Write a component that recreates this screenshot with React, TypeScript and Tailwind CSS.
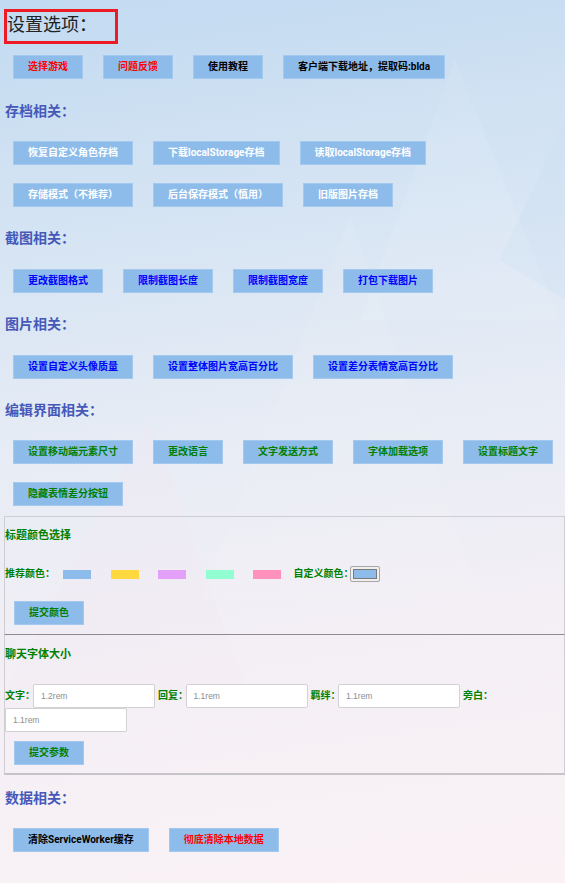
import React from "react";

type B = { t: string; c: string };

const RED = "text-[#ff0000]";
const BLK = "text-black";
const WHT = "text-white";
const BLU = "text-[#0000ff]";
const GRN = "text-[#008000]";

function Btn({ t, c }: B) {
  return (
    <button
      className={`h-[24px] shrink-0 whitespace-nowrap border border-[#a3c9ee] bg-[#8ebcea] px-[14px] text-[10px] font-bold leading-[12px] ${c}`}
    >
      {t}
    </button>
  );
}

function Row({ items, cls = "mt-[20px]" }: { items: B[]; cls?: string }) {
  return (
    <div className={`flex flex-wrap gap-x-[20px] gap-y-[18px] pl-[13px] ${cls}`}>
      {items.map((b) => (
        <Btn key={b.t} t={b.t} c={b.c} />
      ))}
    </div>
  );
}

function Heading({ t, cls = "mt-[21px]" }: { t: string; cls?: string }) {
  return (
    <div className={`flex h-[20px] items-center pl-[5px] text-[14px] font-bold text-[#4659b9] ${cls}`}>
      {t}
    </div>
  );
}

function Field({ label, ph, first }: { label: string; ph: string; first?: boolean }) {
  return (
    <>
      <span
        className={`shrink-0 whitespace-nowrap text-[10px] font-bold leading-[12px] text-[#008000] ${
          first ? "w-[28px]" : "ml-[3px] w-[27.5px]"
        }`}
      >
        {label}
      </span>
      <input
        readOnly
        placeholder={ph}
        className="h-[24px] w-[122px] shrink-0 rounded-[2px] border border-[#d3d1d4] bg-white px-[7px] text-[8.5px] text-[#777] outline-none placeholder:text-[#8e8e8e] [font-family:'Liberation_Sans',Arial,sans-serif]"
      />
    </>
  );
}

export default function App() {
  const swatches = ["bg-[#8ebcea]", "bg-[#ffd93f]", "bg-[#e4a0f9]", "bg-[#91ffd1]", "bg-[#ff91bc]"];
  return (
    <div className="relative min-h-[883px] w-full overflow-hidden bg-[linear-gradient(172deg,#c2daf1_0%,#d3e3f3_22%,#e7ecf5_48%,#f3eff5_70%,#faf2f5_100%)] [font-family:Roboto,'Noto_Sans_CJK_SC',sans-serif]">
      <svg
        className="pointer-events-none absolute inset-0"
        width="565"
        height="883"
        viewBox="0 0 565 883"
      >
        <polygon points="455,60 360,320 560,320" fill="#ffffff" opacity="0.09" />
        <polygon points="350,215 200,600 480,600" fill="#ffffff" opacity="0.08" />
        <polygon points="565,120 500,260 565,300" fill="#b9d4ef" opacity="0.15" />
        <polygon points="150,420 0,700 250,700" fill="#f7e6ee" opacity="0.2" />
      </svg>

      <div className="relative pb-[30px]">
        <div className="ml-[4px] mt-[9px] h-[35px] w-[114px] border-[3px] border-[#ed1c24]">
          <div className="text-[18px] leading-[22px] text-[#222] [font-family:'Noto_Sans_CJK_SC',sans-serif]">
            设置选项：
          </div>
        </div>

        <Row
          cls="mt-[11px]"
          items={[
            { t: "选择游戏", c: RED },
            { t: "问题反馈", c: RED },
            { t: "使用教程", c: BLK },
            { t: "客户端下载地址，提取码:blda", c: BLK },
          ]}
        />

        <Heading t="存档相关：" cls="mt-[22px]" />
        <Row
          items={[
            { t: "恢复自定义角色存档", c: WHT },
            { t: "下载localStorage存档", c: WHT },
            { t: "读取localStorage存档", c: WHT },
            { t: "存储模式（不推荐）", c: WHT },
            { t: "后台保存模式（慎用）", c: WHT },
            { t: "旧版图片存档", c: WHT },
          ]}
        />

        <Heading t="截图相关：" />
        <Row
          cls="mt-[21px]"
          items={[
            { t: "更改截图格式", c: BLU },
            { t: "限制截图长度", c: BLU },
            { t: "限制截图宽度", c: BLU },
            { t: "打包下载图片", c: BLU },
          ]}
        />

        <Heading t="图片相关：" />
        <Row
          cls="mt-[21px]"
          items={[
            { t: "设置自定义头像质量", c: BLU },
            { t: "设置整体图片宽高百分比", c: BLU },
            { t: "设置差分表情宽高百分比", c: BLU },
          ]}
        />

        <Heading t="编辑界面相关：" />
        <Row
          items={[
            { t: "设置移动端元素尺寸", c: GRN },
            { t: "更改语言", c: GRN },
            { t: "文字发送方式", c: GRN },
            { t: "字体加载选项", c: GRN },
            { t: "设置标题文字", c: GRN },
            { t: "隐藏表情差分按钮", c: GRN },
          ]}
        />

        {/* Title colour box */}
        <div className="ml-[4px] mt-[10px] w-[561px] border border-b-0 border-[#cfcdd2] pb-[9px] pt-[11px]">
          <div className="text-[11px] font-bold leading-[16px] text-[#008000]">标题颜色选择</div>
          <div className="mt-[22px] flex h-[16px] items-center">
            <span className="w-[58px] shrink-0 whitespace-nowrap text-[10px] font-bold leading-[12px] text-[#008000]">
              推荐颜色：
            </span>
            {swatches.map((s, i) => (
              <div
                key={s}
                className={`h-[9px] w-[28px] shrink-0 ${s} ${i < 4 ? "mr-[19.5px]" : ""}`}
              />
            ))}
            <span className="ml-[12.5px] w-[56.5px] shrink-0 whitespace-nowrap text-[10px] font-bold leading-[12px] text-[#008000]">
              自定义颜色：
            </span>
            <div className="h-[16px] w-[30px] shrink-0 rounded-[2px] border border-[#a7a7a7] bg-[#efefef] p-[2px]">
              <div className="h-full w-full border border-[#7a7a7a] bg-[#8ebcea]" />
            </div>
          </div>
          <div className="ml-[9px] mt-[19px] flex">
            <Btn t="提交颜色" c={GRN} />
          </div>
        </div>

        {/* Chat font size box */}
        <div className="ml-[4px] w-[561px] border-x border-b-2 border-t border-x-[#cfcdd2] border-b-[#c6c4c9] border-t-[#8d8b8f] pb-[8px] pt-[12px]">
          <div className="text-[11px] font-bold leading-[16px] text-[#008000]">聊天字体大小</div>
          <div className="mt-[21px] flex flex-wrap items-center">
            <Field first label="文字：" ph="1.2rem" />
            <Field label="回复：" ph="1.1rem" />
            <Field label="羁绊：" ph="1.1rem" />
            <Field label="旁白：" ph="1.1rem" />
          </div>
          <div className="ml-[9px] mt-[9px] flex">
            <Btn t="提交参数" c={GRN} />
          </div>
        </div>

        <Heading t="数据相关：" cls="mt-[13px]" />
        <Row
          items={[
            { t: "清除ServiceWorker缓存", c: BLK },
            { t: "彻底清除本地数据", c: RED },
          ]}
        />
      </div>
    </div>
  );
}
